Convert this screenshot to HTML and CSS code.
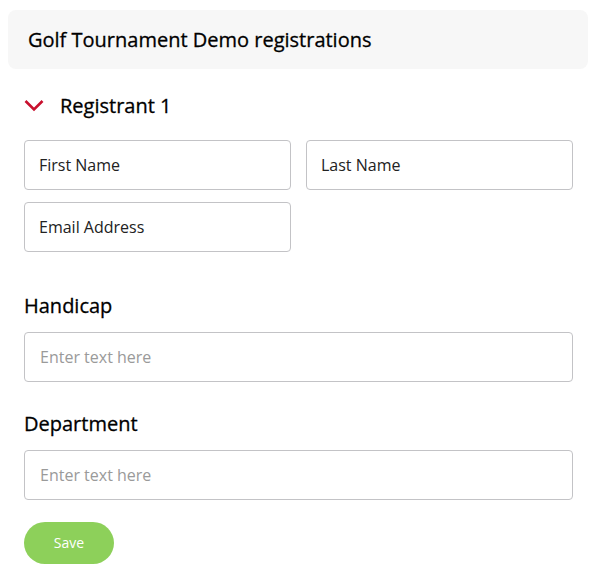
FILE: index.html
```html
<!DOCTYPE html>
<html lang="en">
<head>
<meta charset="utf-8">
<title>Golf Tournament Demo registrations</title>
<link rel="stylesheet" href="styles.css">
</head>
<body>
<div class="page">
  <header class="title-bar">Golf Tournament Demo registrations</header>
  <main class="form">
    <div class="registrant">
      <svg class="chevron" width="20" height="13" viewBox="0 0 20 13" aria-hidden="true">
        <path d="M1.5 2 L10 10.5 L18.5 2" fill="none" stroke="#c8102e" stroke-width="2.6" stroke-linecap="butt" stroke-linejoin="miter"/>
      </svg>
      <span class="registrant-name">Registrant 1</span>
    </div>
    <div class="name-grid">
      <input class="field" type="text" placeholder="First Name">
      <input class="field" type="text" placeholder="Last Name">
      <input class="field" type="text" placeholder="Email Address">
    </div>
    <label class="label label-first">Handicap</label>
    <input class="field field-wide" type="text" placeholder="Enter text here">
    <label class="label">Department</label>
    <input class="field field-wide" type="text" placeholder="Enter text here">
    <button class="save" type="button">Save</button>
  </main>
</div>
</body>
</html>
```
FILE: styles.css
```css
* { box-sizing: border-box; }
html, body { margin: 0; padding: 0; background: #fff; }
body { font-family: "Open Sans", "Noto Sans", sans-serif; color: #111; }
.page { padding: 10px 7px 0 8px; }
.heading {
  font-size: 20px;
  font-weight: 500;
  color: #000;
  -webkit-text-stroke: 0.3px #000;
}
.title-bar {
  height: 59px;
  display: flex;
  align-items: center;
  padding-left: 20px;
  background: #f7f7f7;
  border-radius: 8px;
  font-size: 20px;
  font-weight: 500;
  color: #000;
  -webkit-text-stroke: 0.3px #000;
}
.form { padding: 0 15px 0 16px; display: flex; flex-direction: column; align-items: flex-start; }
.registrant {
  margin-top: 21px;
  height: 30px;
  display: flex;
  align-items: center;
}
.chevron { margin-left: 0; margin-right: 16px; display: block; }
.registrant-name {
  font-size: 20px;
  font-weight: 500;
  color: #000;
  -webkit-text-stroke: 0.3px #000;
}
.name-grid {
  margin-top: 20px;
  width: 100%;
  display: grid;
  grid-template-columns: 1fr 1fr;
  column-gap: 15px;
  row-gap: 12px;
}
.field {
  height: 50px;
  width: 100%;
  border: 1px solid #c3c3c6;
  border-radius: 4px;
  padding: 0 14px;
  font-family: "Open Sans", "Noto Sans", sans-serif;
  font-size: 16px;
  color: #222;
  background: #fff;
  outline: none;
}
.name-grid .field::placeholder { color: #222; opacity: 1; }
.field-wide { padding-left: 15px; }
.field-wide::placeholder { color: #9a9a9a; opacity: 1; }
.label {
  margin-top: 28px;
  height: 28px;
  line-height: 28px;
  font-size: 20px;
  font-weight: 500;
  color: #000;
  -webkit-text-stroke: 0.3px #000;
  margin-bottom: 12px;
}
.label-first { margin-top: 40px; }
.save {
  margin-top: 22px;
  width: 90px;
  height: 42px;
  padding: 0 0 2px;
  border: none;
  border-radius: 21px;
  background: #8dd05a;
  color: #fff;
  font-family: "Open Sans", "Noto Sans", sans-serif;
  font-size: 14px;
  cursor: pointer;
}
```
